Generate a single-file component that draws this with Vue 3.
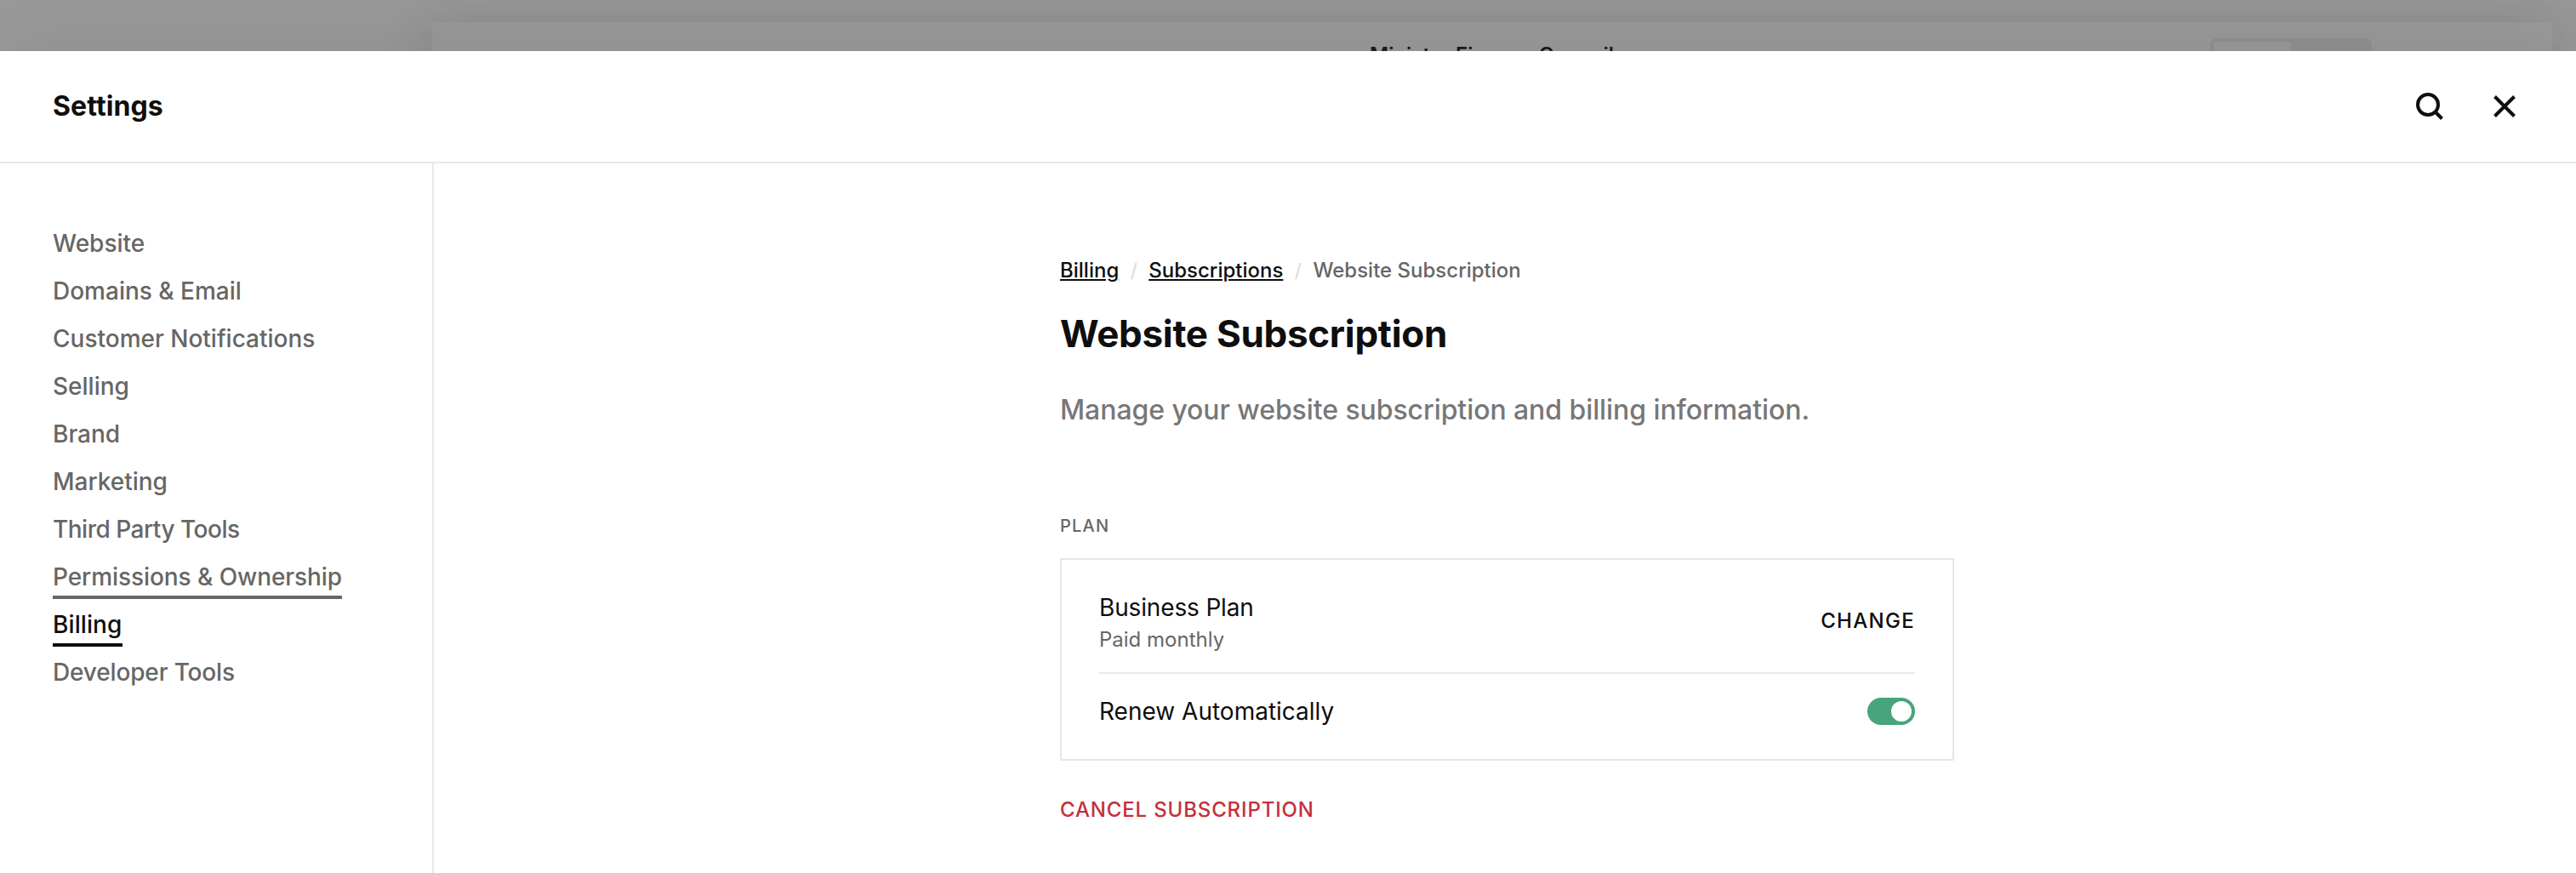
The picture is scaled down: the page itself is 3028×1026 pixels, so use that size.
<script setup>
import { ref } from 'vue'

const navItems = [
  { label: 'Website' },
  { label: 'Domains & Email' },
  { label: 'Customer Notifications' },
  { label: 'Selling' },
  { label: 'Brand' },
  { label: 'Marketing' },
  { label: 'Third Party Tools', tight: true },
  { label: 'Permissions & Ownership', hover: true },
  { label: 'Billing', active: true },
  { label: 'Developer Tools', snug: true },
]
const autoRenew = ref(true)
</script>

<template>
  <div class="screen">
    <div class="backdrop">
      <div class="preview">
        <span class="site-name">Ministry Finance Council</span>
        <div class="device-switch"><div class="device-active"></div></div>
      </div>
    </div>

    <section class="modal">
      <header class="modal-header">
        <h2 class="modal-title">Settings</h2>
        <div class="actions">
          <button class="icon-btn" aria-label="Search">
            <svg width="44" height="44" viewBox="0 0 44 44" fill="none" stroke="#0e0e0e" stroke-width="4">
              <circle cx="20" cy="20" r="12" />
              <path d="M28.5 28.5L36.5 36.5" />
            </svg>
          </button>
          <button class="icon-btn" aria-label="Close">
            <svg width="44" height="44" viewBox="0 0 44 44" fill="none" stroke="#0e0e0e" stroke-width="4">
              <path d="M10.5 10.5L33.5 33.5M33.5 10.5L10.5 33.5" />
            </svg>
          </button>
        </div>
      </header>

      <div class="body">
        <nav class="sidebar">
          <a
            v-for="item in navItems"
            :key="item.label"
            class="nav-link"
            :class="{ active: item.active, hover: item.hover, tight: item.tight, snug: item.snug }"
          >{{ item.label }}</a>
        </nav>

        <main class="content">
          <div class="crumbs">
            <a class="crumb-link">Billing</a>
            <span class="slash">/</span>
            <a class="crumb-link">Subscriptions</a>
            <span class="slash">/</span>
            <span class="crumb-current">Website Subscription</span>
          </div>
          <h1 class="title">Website Subscription</h1>
          <p class="lead">Manage your website subscription and billing information.</p>

          <h3 class="section-label">PLAN</h3>
          <div class="card">
            <div class="row plan-row">
              <div>
                <div class="row-title plan-name">Business Plan</div>
                <div class="row-note">Paid monthly</div>
              </div>
              <button class="change">CHANGE</button>
            </div>
            <div class="row renew-row">
              <div class="row-title">Renew Automatically</div>
              <button class="toggle" :class="{ on: autoRenew }" aria-label="Renew Automatically" @click="autoRenew = !autoRenew">
                <span class="knob"></span>
              </button>
            </div>
          </div>
          <button class="cancel">CANCEL SUBSCRIPTION</button>
        </main>
      </div>
    </section>
  </div>
</template>

<style>
body {
  margin: 0;
}
</style>

<style scoped>
.screen {
  height: 1026px;
  overflow: hidden;
  display: flex;
  flex-direction: column;
  background: #999;
  color: #0e0e0e;
  font-family: Inter, "Liberation Sans", sans-serif;
}
h1, h2, h3, p {
  margin: 0;
}
button {
  border: 0;
  padding: 0;
  background: none;
  font-family: inherit;
}
.backdrop {
  flex: none;
  height: 60px;
  box-sizing: border-box;
  padding: 26px 28px 0 508px;
}
.preview {
  position: relative;
  height: 200px;
  background: #999;
  box-shadow: 0 0 60px rgba(0, 0, 0, 0.11);
}
.site-name {
  position: absolute;
  left: 1102px;
  top: 21px;
  font-size: 24px;
  line-height: 36px;
  font-weight: 600;
  color: #1a1a1a;
  white-space: nowrap;
}
.device-switch {
  position: absolute;
  left: 2090px;
  top: 19px;
  width: 190px;
  height: 72px;
  box-sizing: border-box;
  padding: 4px;
  border-radius: 7px;
  background: #909090;
}
.device-active {
  width: 91px;
  height: 64px;
  border-radius: 4px;
  background: #999;
}
.modal {
  position: relative;
  flex: 1;
  display: flex;
  flex-direction: column;
  background: #fff;
  box-shadow: 0 0 100px rgba(0, 0, 0, 0.08);
}
.modal-header {
  flex: none;
  height: 132px;
  box-sizing: border-box;
  padding: 0 62px;
  display: flex;
  align-items: center;
  justify-content: space-between;
  border-bottom: 2px solid #e7e7e7;
}
.modal-title {
  font-size: 32px;
  line-height: 40px;
  font-weight: 700;
  letter-spacing: 0.1px;
}
.actions {
  display: flex;
  gap: 44px;
}
.icon-btn {
  width: 44px;
  height: 44px;
}
.icon-btn svg {
  display: block;
}
.body {
  flex: 1;
  display: flex;
}
.sidebar {
  flex: none;
  width: 510px;
  box-sizing: border-box;
  padding: 66px 0 0 62px;
  border-right: 2px solid #e7e7e7;
  display: flex;
  flex-direction: column;
  align-items: flex-start;
}
.nav-link {
  height: 54px;
  margin-bottom: 2px;
  box-sizing: border-box;
  border-bottom: 4px solid transparent;
  font-size: 28px;
  line-height: 56px;
  font-weight: 500;
  color: #666;
  white-space: nowrap;
}
.nav-link.tight {
  letter-spacing: -0.5px;
}
.nav-link.snug {
  letter-spacing: -0.15px;
}
.nav-link.hover {
  border-bottom-color: #666;
  letter-spacing: -0.07px;
}
.nav-link.active {
  color: #0e0e0e;
  border-bottom-color: #0e0e0e;
  letter-spacing: 0.1px;
}
.content {
  width: 1051px;
  margin-left: 736px;
  padding-top: 106px;
}
.crumbs {
  display: flex;
  height: 40px;
  font-size: 24px;
  line-height: 40px;
  font-weight: 500;
}
.crumb-link {
  text-decoration: underline;
  text-decoration-thickness: 2px;
  text-underline-offset: 2px;
  text-decoration-skip-ink: auto;
}
.slash {
  width: 35px;
  text-align: center;
  font-size: 22px;
  color: #dedede;
}
.crumb-current {
  color: #666;
}
.title {
  margin-top: 26px;
  font-size: 44px;
  line-height: 56px;
  font-weight: 700;
  letter-spacing: -0.3px;
}
.lead {
  margin-top: 38px;
  font-size: 32px;
  line-height: 48px;
  font-weight: 500;
  letter-spacing: -0.08px;
  color: #777;
}
.section-label {
  margin-top: 100px;
  font-size: 20px;
  line-height: 24px;
  font-weight: 500;
  letter-spacing: 1.2px;
  color: #666;
}
.card {
  margin-top: 26px;
  height: 238px;
  box-sizing: border-box;
  border: 2px solid #e7e7e7;
  padding: 0 44px;
}
.row {
  display: flex;
  justify-content: space-between;
}
.plan-row {
  height: 134px;
  box-sizing: border-box;
  padding-top: 36px;
  border-bottom: 2px solid #e7e7e7;
}
.renew-row {
  height: 88px;
  align-items: center;
}
.row-title {
  font-size: 28px;
  line-height: 40px;
}
.plan-name {
  letter-spacing: -0.15px;
}
.row-note {
  font-size: 24px;
  line-height: 36px;
  color: #666;
}
.change {
  height: 71px;
  font-size: 24px;
  font-weight: 500;
  letter-spacing: 1.3px;
  color: #0e0e0e;
}
.toggle {
  width: 56px;
  height: 32px;
  box-sizing: border-box;
  padding: 4px;
  border-radius: 16px;
  display: flex;
  background: #bbb;
}
.toggle.on {
  justify-content: flex-end;
  background: #46a57c;
}
.knob {
  width: 24px;
  height: 24px;
  border-radius: 50%;
  background: #fff;
}
.cancel {
  display: block;
  margin-top: 42px;
  font-size: 24px;
  line-height: 32px;
  font-weight: 500;
  letter-spacing: 0.85px;
  color: #c62f3b;
}
</style>
